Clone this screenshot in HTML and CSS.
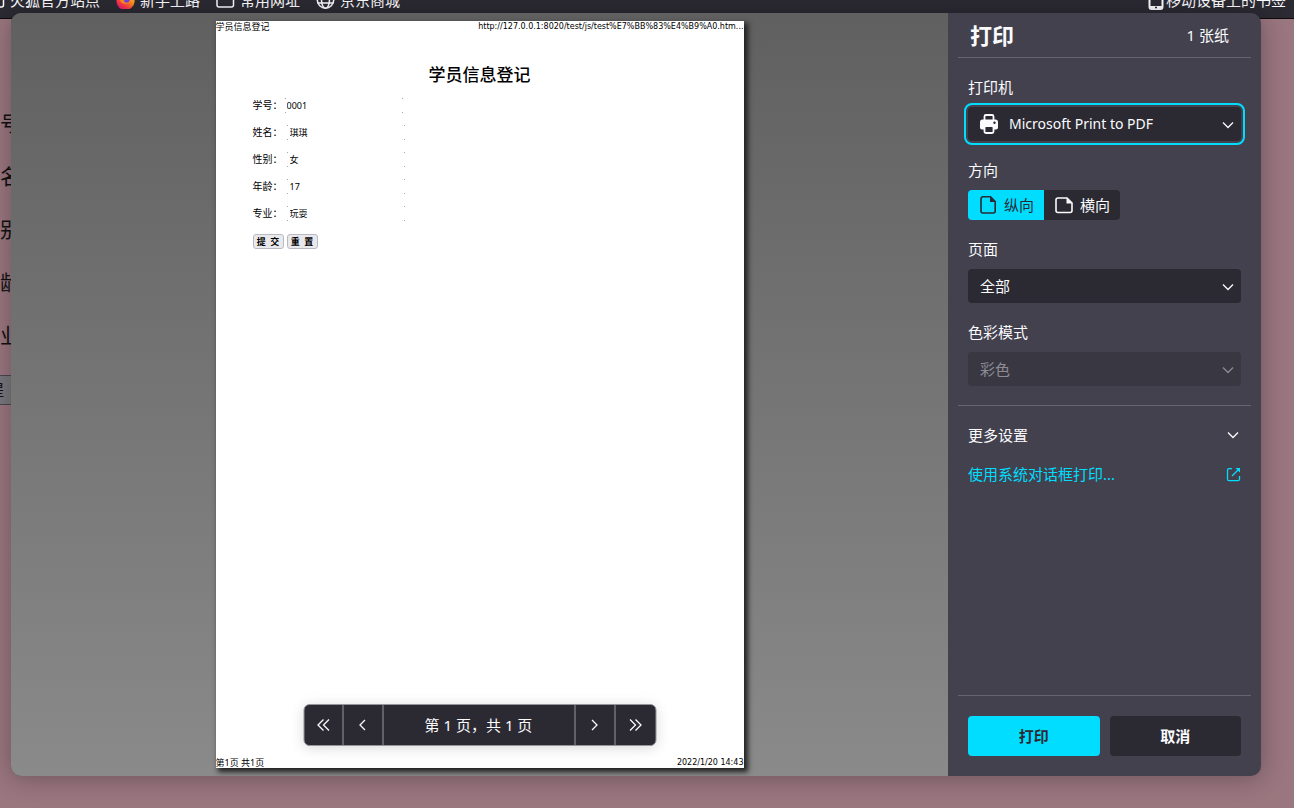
FILE: index.html
```
<!DOCTYPE html>
<html lang="zh-CN">
<head>
    <meta charset="UTF-8">
    <meta name="viewport" content="width=device-width, initial-scale=1.0">
    <title>学员信息登记</title>
    <link rel="stylesheet" href="styles.css">
</head>
<body>
    <!-- Bookmarks toolbar -->
    <nav class="bookmarks">
        <div class="bookmarks-row">
            <a class="bookmark" href="#">
                <svg width="19" height="18" viewBox="0 0 19 18"><path d="M1 3.5a2 2 0 0 1 2-2h4l2 2.5h6.500a2 2 0 0 1 2 2V14a2 2 0 0 1-2 2H3a2 2 0 0 1-2-2z" fill="none" stroke="#fbfbfe" stroke-width="1.500"/></svg>
                火狐官方站点
            </a>
            <a class="bookmark" href="#">
                <svg width="19" height="18" viewBox="0 0 19 18">
                    <defs>
                        <linearGradient id="fox" x1="0.9" y1="0" x2="0.2" y2="1">
                            <stop offset="0" stop-color="#ffe226"/>
                            <stop offset="0.450" stop-color="#ff8a1f"/>
                            <stop offset="0.750" stop-color="#ff3647"/>
                            <stop offset="1" stop-color="#e31587"/>
                        </linearGradient>
                    </defs>
                    <path d="M2 4C3 1 5 2 7 3c2-3 4-3 4-3 1 2 3 2 4 3 2 1 4 4 3.500 8A9 8.500 0 0 1 .5 10C0 7 1 5 2 4z" fill="url(#fox)"/>
                    <circle cx="9.500" cy="8.500" r="4.200" fill="#7542e5"/>
                    <path d="M4 5c2-1 4 0 5 1l2 1c0 2-3 1-3 3 1 2 4 2 6 0-1 4-9 4-10-1z" fill="#ff8a1f"/>
                </svg>
                新手上路
            </a>
            <a class="bookmark" href="#">
                <svg width="19" height="18" viewBox="0 0 19 18"><path d="M1 3.500a2 2 0 0 1 2-2h4l2 2.500h6.500a2 2 0 0 1 2 2V14a2 2 0 0 1-2 2H3a2 2 0 0 1-2-2z" fill="none" stroke="#fbfbfe" stroke-width="1.500"/></svg>
                常用网址
            </a>
            <a class="bookmark" href="#">
                <svg width="19" height="18" viewBox="0 0 19 18" fill="none" stroke="#fbfbfe" stroke-width="1.500"><circle cx="9.500" cy="9" r="8.200"/><ellipse cx="9.500" cy="9" rx="4" ry="8.200"/><path d="M1.500 6h16M1.500 12h16"/></svg>
                京东商城
            </a>
            <a class="bookmark bookmark-mobile" href="#">
                <svg width="16" height="20" viewBox="0 0 16 20"><rect x="1.500" y="1" width="13" height="18" rx="2" fill="none" stroke="#fbfbfe" stroke-width="2"/><path d="M2 16h12v3H2z" fill="#fbfbfe"/><path d="M7 17.500h2" stroke="#2b2a33" stroke-width="1.500"/></svg>
                移动设备上的书签
            </a>
        </div>
    </nav>

    <!-- Page behind the dialog -->
    <main class="page">
        <p>学号</p>
        <p>姓名</p>
        <p>性别</p>
        <p>年龄</p>
        <p>专业</p>
        <button class="page-submit" type="button">提&emsp;交</button>
    </main>

    <!-- Print dialog -->
    <div class="dialog" role="dialog" aria-label="打印">
        <section class="preview">
            <article class="sheet">
                <header class="sheet-edge">
                    <span>学员信息登记</span>
                    <span class="sheet-small">http://127.0.0.1:8020/test/js/test%E7%BB%83%E4%B9%A0.htm...</span>
                </header>
                <h1>学员信息登记</h1>
                <form class="sheet-form">
                    <div class="field"><label for="no">学号：</label><input id="no" class="tight" type="text" value="0001"></div>
                    <div class="field"><label for="name">姓名：</label><input id="name" type="text" value="琪琪"></div>
                    <div class="field"><label for="sex">性别：</label><input id="sex" type="text" value="女"></div>
                    <div class="field"><label for="age">年龄：</label><input id="age" type="text" value="17"></div>
                    <div class="field"><label for="major">专业：</label><input id="major" type="text" value="玩耍"></div>
                    <div class="sheet-buttons">
                        <button type="button">提&ensp;交</button>
                        <button type="button">重&ensp;置</button>
                    </div>
                </form>
                <footer class="sheet-edge">
                    <span>第1页 共1页</span>
                    <span class="sheet-small">2022/1/20 14:43</span>
                </footer>
            </article>

            <div class="pager">
                <button type="button" aria-label="首页"><svg width="16" height="16" viewBox="0 0 16 16"><path d="M8 2.500 2.500 8 8 13.500M13.500 2.500 8 8l5.500 5.500"/></svg></button>
                <button type="button" aria-label="上一页"><svg width="16" height="16" viewBox="0 0 16 16"><path d="M10.500 3 5.500 8l5 5"/></svg></button>
                <span class="pager-text">第 1 页，共 1 页</span>
                <button type="button" aria-label="下一页"><svg width="16" height="16" viewBox="0 0 16 16"><path d="m5.500 3 5 5-5 5"/></svg></button>
                <button type="button" aria-label="末页"><svg width="16" height="16" viewBox="0 0 16 16"><path d="M2.500 2.500 8 8l-5.500 5.500M8 2.500 13.500 8 8 13.500"/></svg></button>
            </div>
        </section>

        <aside class="settings">
            <header class="settings-header">
                <h2>打印</h2>
                <span>1 张纸</span>
            </header>

            <div class="settings-body">
                <div class="group">
                    <label for="printer">打印机</label>
                    <div class="select focused">
                        <svg class="printer" width="20" height="20" viewBox="0 0 20 20">
                            <path d="M5.500 6V2.500a1.500 1.500 0 0 1 1.500-1.500h6a1.500 1.500 0 0 1 1.500 1.500V6" fill="none" stroke="#fbfbfe" stroke-width="1.800"/>
                            <path d="M3.500 5.500h13A2.500 2.500 0 0 1 19 8v5.500a2 2 0 0 1-2 2H3a2 2 0 0 1-2-2V8a2.500 2.500 0 0 1 2.500-2.500z" fill="#fbfbfe"/>
                            <rect x="5.500" y="12" width="9" height="7" rx="1.500" fill="#2b2a33" stroke="#fbfbfe" stroke-width="1.800"/>
                            <circle cx="15.500" cy="8.800" r="1.200" fill="#2b2a33"/>
                        </svg>
                        <select id="printer"><option>Microsoft Print to PDF</option></select>
                        <svg class="chevron" width="12" height="12" viewBox="0 0 12 12"><path d="m1 3.500 5 5 5-5"/></svg>
                    </div>
                </div>

                <fieldset class="group">
                    <legend>方向</legend>
                    <div class="toggle">
                        <input type="radio" name="orientation" id="portrait" checked>
                        <label for="portrait">
                            <svg width="20" height="20" viewBox="0 0 20 20"><path d="M5 1.800h7.500L17.200 6.500V16a2 2 0 0 1-2 2H5a2 2 0 0 1-2-2V3.800a2 2 0 0 1 2-2z" fill="none" stroke="currentColor" stroke-width="1.600"/><path d="M12 1.800V7h5.200z" fill="currentColor"/></svg>
                            纵向
                        </label>
                        <input type="radio" name="orientation" id="landscape">
                        <label for="landscape">
                            <svg width="20" height="20" viewBox="0 0 20 20"><path d="M4 3h9l5 5v7.500a2 2 0 0 1-2 2H4a2 2 0 0 1-2-2V5a2 2 0 0 1 2-2z" fill="none" stroke="currentColor" stroke-width="1.600"/><path d="M12.500 3v5.500H18z" fill="currentColor"/></svg>
                            横向
                        </label>
                    </div>
                </fieldset>

                <div class="group">
                    <label for="pages">页面</label>
                    <div class="select">
                        <select id="pages"><option>全部</option></select>
                        <svg class="chevron" width="12" height="12" viewBox="0 0 12 12"><path d="m1 3.500 5 5 5-5"/></svg>
                    </div>
                </div>

                <div class="group">
                    <label for="color">色彩模式</label>
                    <div class="select disabled">
                        <select id="color" disabled><option>彩色</option></select>
                        <svg class="chevron" width="12" height="12" viewBox="0 0 12 12"><path d="m1 3.500 5 5 5-5"/></svg>
                    </div>
                </div>
            </div>

            <div class="settings-more">
                <button class="more" type="button">
                    更多设置
                    <svg class="chevron-more" width="12" height="12" viewBox="0 0 12 12"><path d="m1 3.500 5 5 5-5"/></svg>
                </button>
                <a class="system-link" href="#">
                    使用系统对话框打印...
                    <svg width="15" height="15" viewBox="0 0 15 15" fill="none" stroke="currentColor" stroke-width="1.300"><path d="M6 1.700H3a1.500 1.500 0 0 0-1.500 1.500v9A1.500 1.500 0 0 0 3 13.700h9a1.500 1.500 0 0 0 1.500-1.500V9M6 9l6-6"/><path d="M9.500 1H14v4.500z" fill="currentColor" stroke="none"/></svg>
                </a>
            </div>

            <footer class="settings-footer">
                <button class="primary" type="button">打印</button>
                <button type="button">取消</button>
            </footer>
        </aside>
    </div>
</body>
</html>
```
FILE: styles.css
```
* { box-sizing: border-box; }
body {
    position: relative;
    height: 100vh;
    margin: 0;
    overflow: hidden;
    background-color: #9a767f;
    color: #fbfbfe;
    font-family: "Noto Sans", "Noto Sans CJK SC", sans-serif;
    font-size: 15px;
    line-height: 20px;
}
h1, h2, p { margin: 0; }
button, input, select {
    font: inherit;
    color: inherit;
}
svg { flex: none; }

/* Bookmarks toolbar */
.bookmarks {
    height: 19px;
    overflow: hidden;
    background-color: #2b2a33;
    border-bottom: 1px solid #0c0c0d;
}
.bookmarks-row {
    display: flex;
    gap: 16px;
    margin: -10px 8px 0 -14px;
}
.bookmark {
    display: flex;
    align-items: center;
    gap: 5px;
    color: #fbfbfe;
    text-decoration: none;
    white-space: nowrap;
}
.bookmark-mobile {
    gap: 2px;
    margin-left: auto;
}

/* Page behind the dialog */
.page {
    margin-left: -21px;
    padding-top: 88px;
    color: #111;
    font-size: 21px;
}
.page p {
    height: 32px;
    margin-bottom: 21px;
    line-height: 32px;
}
.page-submit {
    display: block;
    height: 30px;
    margin-top: 24px;
    padding: 0 8px;
    border: 1px solid #4c464e;
    background-color: #77777d;
    font-size: 16px;
}

/* Print dialog */
.dialog {
    position: absolute;
    inset: 13px 33px 32px 11px;
    display: flex;
    overflow: hidden;
    border-radius: 10px;
    background-color: #42414d;
    box-shadow: 0 2px 24px rgba(0, 0, 0, 0.3);
}

/* Preview */
.preview {
    position: relative;
    flex: 1;
    display: flex;
    justify-content: center;
    padding: 8px;
    background: linear-gradient(#606060, #8a8a8a);
}
.sheet {
    display: flex;
    flex-direction: column;
    aspect-ratio: 528 / 747;
    height: 100%;
    background-color: #fff;
    color: #000;
    box-shadow: 3px 3px 5px 1px #222;
    font-size: 9px;
    line-height: 11px;
}
.sheet-edge {
    display: flex;
    justify-content: space-between;
}
.sheet-small {
    font-family: "DejaVu Sans", sans-serif;
    font-size: 8px;
}
.sheet h1 {
    margin-top: 31px;
    font-size: 17px;
    font-weight: 500;
    line-height: 24px;
    text-align: center;
}
.sheet-form {
    flex: 1;
    padding: 11px 37px;
}
.field {
    display: flex;
    align-items: center;
    height: 15px;
    margin-bottom: 12px;
}
.field label {
    width: 34px;
    font-size: 10px;
}
.field input {
    width: 118px;
    height: 15px;
    padding: 0 3px;
    border: 0;
    /* only the corner pixels of the box get printed */
    background:
        linear-gradient(#aaa, #aaa) 0 0 / 1px 1px no-repeat,
        linear-gradient(#aaa, #aaa) 100% 0 / 1px 1px no-repeat,
        linear-gradient(#aaa, #aaa) 0 100% / 1px 1px no-repeat,
        linear-gradient(#aaa, #aaa) 100% 100% / 1px 1px no-repeat;
}
.field .tight {
    margin-left: -2px;
    padding: 0 2px;
}
.sheet-buttons {
    display: flex;
    gap: 3px;
    padding-top: 1px;
}
.sheet-buttons button {
    width: 31px;
    height: 15px;
    padding: 0;
    border: 1px solid #b9b9c2;
    border-radius: 3px;
    background-color: #e9e9ed;
    font-weight: bold;
}

/* Page navigator */
.pager {
    position: absolute;
    bottom: 30px;
    left: 50%;
    display: flex;
    height: 42px;
    transform: translateX(-50%);
    overflow: hidden;
    border: 1px solid #96969a;
    border-radius: 6px;
    background-color: #2b2a33;
    box-shadow: 0 2px 14px rgba(0, 0, 0, 0.15);
}
.pager button {
    display: grid;
    place-items: center;
    width: 40px;
    padding: 0;
    border: 0;
    border-right: 1px solid #96969a;
    background: none;
}
.pager button:first-child { width: 39px; }
.pager button:last-child { border-right: 0; }
.pager svg, .chevron, .chevron-more {
    fill: none;
    stroke: #fbfbfe;
    stroke-width: 1.3;
}
.pager-text {
    width: 192px;
    border-right: 1px solid #96969a;
    line-height: 40px;
    text-align: center;
}

/* Settings */
.settings {
    display: flex;
    flex-direction: column;
    width: 313px;
}
.settings-header {
    display: flex;
    justify-content: space-between;
    align-items: center;
    height: 45px;
    margin: 0 10px;
    padding: 0 22px 0 12px;
    border-bottom: 1px solid #66656f;
}
.settings-header h2 {
    font-size: 22px;
    line-height: 28px;
}
.settings-body {
    display: flex;
    flex-direction: column;
    gap: 19px;
    margin: 0 10px;
    padding: 19px 10px;
    border-bottom: 1px solid #66656f;
}
.group {
    display: flex;
    flex-direction: column;
    gap: 10px;
    margin: 0;
    padding: 0;
    border: 0;
}
.group legend {
    margin-bottom: 10px;
    padding: 0;
}
.select {
    position: relative;
    height: 34px;
    border-radius: 4px;
    background-color: #2b2a33;
}
.select select {
    width: 100%;
    height: 100%;
    padding: 0 30px 0 12px;
    appearance: none;
    border: 0;
    background: none;
    opacity: 1;
}
.select.focused {
    outline: 2px solid #00ddff;
    outline-offset: 2px;
}
.focused select {
    padding-left: 41px;
    font-size: 14px;
}
.printer {
    position: absolute;
    top: 7px;
    left: 11px;
}
.chevron {
    position: absolute;
    top: 12px;
    right: 7px;
}
.select.disabled { opacity: 0.4; }
.toggle { display: flex; }
.toggle input {
    position: absolute;
    opacity: 0;
}
.toggle label {
    display: flex;
    align-items: center;
    gap: 6px;
    height: 30px;
    padding: 0 10px;
    background-color: #2b2a33;
}
.toggle label:first-of-type { border-radius: 4px 0 0 4px; }
.toggle label:last-of-type { border-radius: 0 4px 4px 0; }
.toggle input:checked + label {
    background-color: #00ddff;
    color: #2b2a33;
}
.settings-more {
    display: flex;
    flex: 1;
    flex-direction: column;
    gap: 19px;
    margin: 0 10px;
    padding: 19px 10px;
}
.more, .system-link {
    display: flex;
    justify-content: space-between;
    align-items: center;
    padding: 0;
    border: 0;
    background: none;
}
.chevron-more { margin-right: 2px; }
.system-link {
    color: #00ddff;
    text-decoration: none;
}
.settings-footer {
    display: flex;
    gap: 10px;
    margin: 0 10px;
    padding: 20px 10px;
    border-top: 1px solid #66656f;
}
.settings-footer button {
    flex: 1;
    height: 40px;
    border: 0;
    border-radius: 4px;
    background-color: #2b2a33;
    font-weight: bold;
}
.settings-footer .primary {
    background-color: #00ddff;
    color: #2b2a33;
}
```
